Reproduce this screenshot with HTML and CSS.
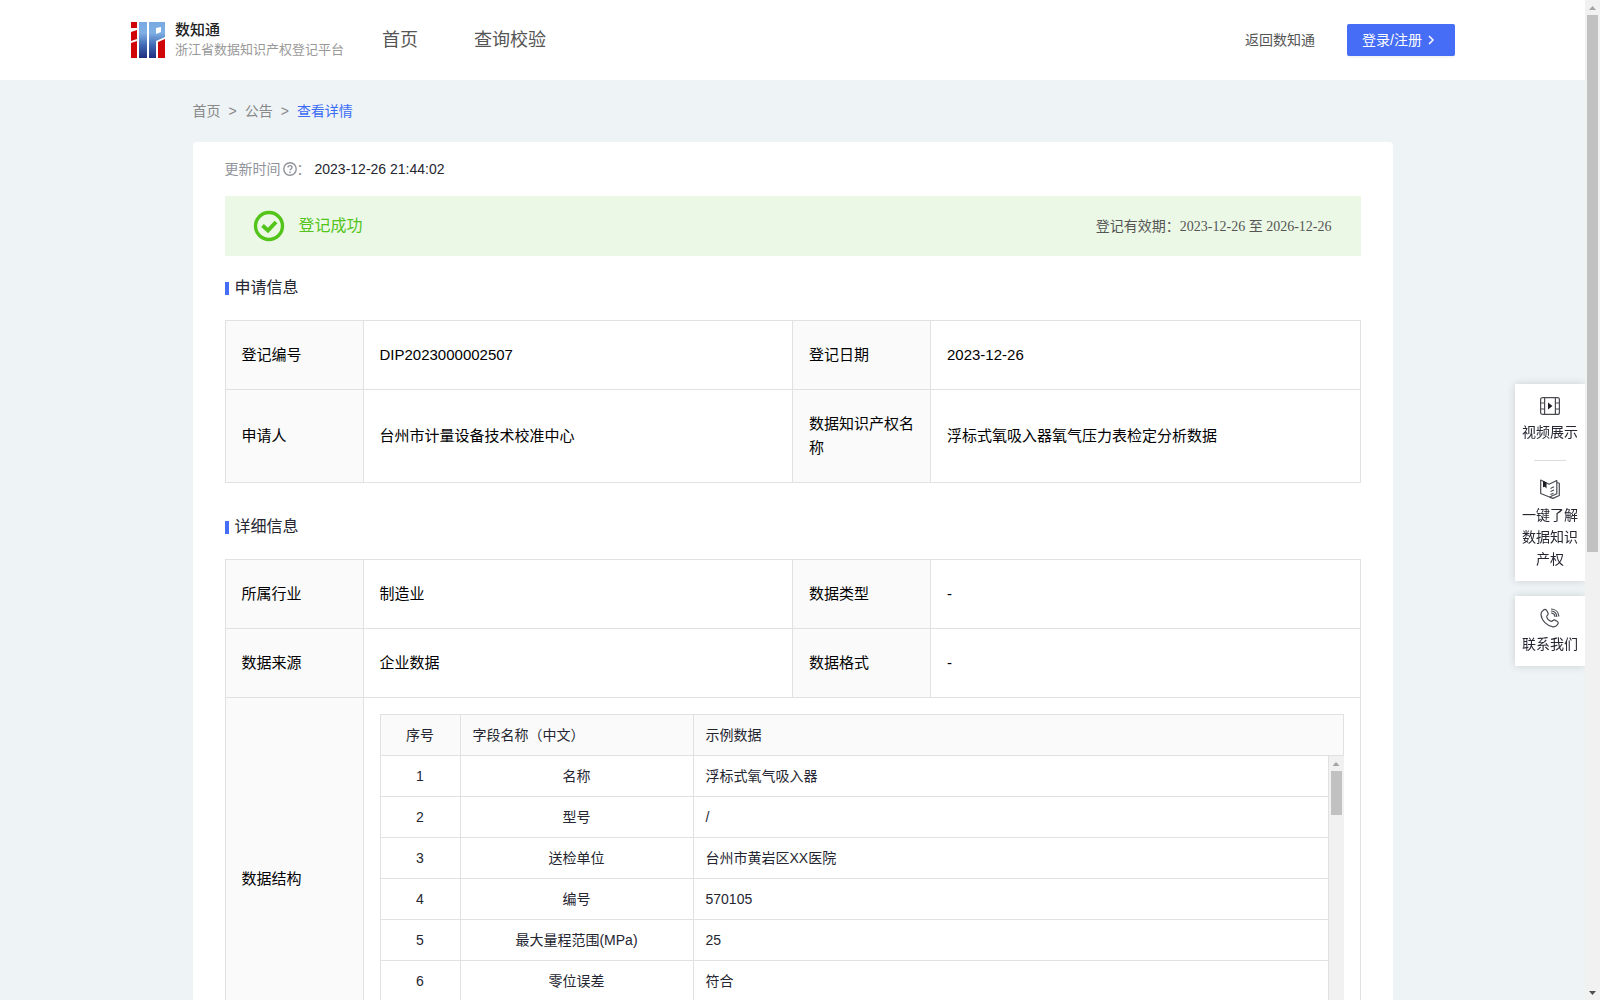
FILE: index.html
```html
<!DOCTYPE html>
<html lang="zh-CN">
<head>
<meta charset="utf-8">
<title>数知通 - 浙江省数据知识产权登记平台</title>
<link rel="stylesheet" href="styles.css">
</head>
<body>
<div class="window">
  <div class="page">
    <header class="header">
      <div class="header-inner">
        <a class="brand" href="#">
          <svg class="brand-logo" viewBox="0 0 34 36" width="34" height="36" aria-hidden="true">
            <defs>
              <linearGradient id="blue" gradientUnits="userSpaceOnUse" x1="0" y1="0" x2="0" y2="36">
                <stop offset="0" stop-color="#78a9e2"/>
                <stop offset=".3" stop-color="#7fb0e4"/>
                <stop offset=".65" stop-color="#4068b4"/>
                <stop offset="1" stop-color="#1f2f7e"/>
              </linearGradient>
            </defs>
            <path fill="#d00508" d="M0 0h6v6H0zM0 10l6-2v9l-6 2zM0 21l6-2v17H0zM27 20l7-3v19h-7z"/>
            <path fill="url(#blue)" d="M8 0h8v36H8z"/>
            <path fill="url(#blue)" d="M18 0h16v15l-9 4v17h-7zM25 6v6l5-2V5z" fill-rule="evenodd"/>
          </svg>
          <span class="brand-text">
            <strong class="brand-name">数知通</strong>
            <span class="brand-sub">浙江省数据知识产权登记平台</span>
          </span>
        </a>
        <nav class="nav">
          <a href="#">首页</a>
          <a href="#">查询校验</a>
        </nav>
        <div class="header-actions">
          <a class="back-link" href="#">返回数知通</a>
          <button class="login" type="button">登录/注册
            <svg viewBox="0 0 12 12" width="12" height="12" aria-hidden="true"><path d="M3 2l4 4-4 4" fill="none" stroke="currentColor" stroke-width="1.5"/></svg>
          </button>
        </div>
      </div>
    </header>

    <main class="main">
      <nav class="breadcrumb" aria-label="面包屑">
        <a href="#">首页</a><span>&gt;</span><a href="#">公告</a><span>&gt;</span><a class="current" href="#">查看详情</a>
      </nav>

      <article class="card">
        <div class="updated">
          <span class="updated-label">更新时间</span>
          <svg viewBox="0 0 14 14" width="14" height="14" aria-hidden="true">
            <circle cx="7" cy="7" r="6.2" fill="none" stroke="#909399" stroke-width="1.4"/>
            <path d="M5 5.6c0-2.6 4-2.6 4 0 0 1.300-2 1.400-2 2.700M7 9.600v1.300" fill="none" stroke="#909399" stroke-width="1.400"/>
          </svg>
          <span class="updated-label">：</span>
          <time class="updated-time">2023-12-26 21:44:02</time>
        </div>

        <div class="status">
          <svg viewBox="0 0 32 32" width="32" height="32" aria-hidden="true">
            <circle cx="16" cy="16" r="13.500" fill="none" stroke="#52c41a" stroke-width="3.400"/>
            <path d="M9.500 15.500l5.500 5 8-8.500" fill="none" stroke="#52c41a" stroke-width="4"/>
          </svg>
          <span class="status-text">登记成功</span>
          <span class="status-period">登记有效期：<span class="status-dates">2023-12-26 至 2026-12-26</span></span>
        </div>

        <h2 class="section-title">申请信息</h2>
        <table class="info">
          <colgroup><col class="col-label"><col><col class="col-label"><col></colgroup>
          <tbody>
            <tr><th scope="row">登记编号</th><td>DIP2023000002507</td><th scope="row">登记日期</th><td>2023-12-26</td></tr>
            <tr><th scope="row">申请人</th><td>台州市计量设备技术校准中心</td><th scope="row">数据知识产权名称</th><td>浮标式氧吸入器氧气压力表检定分析数据</td></tr>
          </tbody>
        </table>

        <h2 class="section-title">详细信息</h2>
        <table class="info">
          <colgroup><col class="col-label"><col><col class="col-label"><col></colgroup>
          <tbody>
            <tr><th scope="row">所属行业</th><td>制造业</td><th scope="row">数据类型</th><td>-</td></tr>
            <tr><th scope="row">数据来源</th><td>企业数据</td><th scope="row">数据格式</th><td>-</td></tr>
            <tr>
              <th scope="row">数据结构</th>
              <td class="nested" colspan="3">
                <table class="fields fields-head">
                  <colgroup><col class="col-index"><col class="col-name"><col></colgroup>
                  <thead><tr><th scope="col">序号</th><th scope="col">字段名称（中文）</th><th scope="col">示例数据</th></tr></thead>
                </table>
                <div class="fields-body">
                  <div class="fields-scroll">
                    <table class="fields">
                      <colgroup><col class="col-index"><col class="col-name"><col></colgroup>
                      <tbody>
                        <tr><td>1</td><td>名称</td><td>浮标式氧气吸入器</td></tr>
                        <tr><td>2</td><td>型号</td><td>/</td></tr>
                        <tr><td>3</td><td>送检单位</td><td>台州市黄岩区XX医院</td></tr>
                        <tr><td>4</td><td>编号</td><td>570105</td></tr>
                        <tr><td>5</td><td>最大量程范围(MPa)</td><td>25</td></tr>
                        <tr><td>6</td><td>零位误差</td><td>符合</td></tr>
                      </tbody>
                    </table>
                  </div>
                  <div class="scrollbar" aria-hidden="true">
                    <span class="arrow arrow-up"></span>
                    <span class="thumb thumb-fields"></span>
                  </div>
                </div>
              </td>
            </tr>
          </tbody>
        </table>
      </article>
    </main>
  </div>

  <div class="scrollbar" aria-hidden="true">
    <span class="arrow arrow-up"></span>
    <span class="thumb thumb-page"></span>
    <span class="arrow arrow-down"></span>
  </div>

  <aside class="side">
    <div class="side-box">
      <a class="side-item" href="#">
        <svg viewBox="0 0 20 20" width="20" height="20" aria-hidden="true">
          <g fill="none" stroke="#4a4b52" stroke-width="1.2">
            <rect x=".6" y="1.600" width="18.800" height="16.800" rx="2"/>
            <path d="M4.600 2v16M15.400 2v16M1 7h3.600M1 13h3.600M15.400 7H19M15.400 13H19"/>
          </g>
          <path d="M8 6.500v7l4.500-3.500z" fill="#1d1e24"/>
        </svg>
        <span>视频展示</span>
      </a>
      <hr class="side-rule">
      <a class="side-item" href="#">
        <svg viewBox="0 0 20 20" width="20" height="20" aria-hidden="true">
          <g fill="none" stroke="#4a4b52" stroke-width="1.2" stroke-linejoin="round">
            <path d="M.7 1l8.300 4.200L16.800 1.500v13.200L9.500 18 .7 14.500zM17 3.500l2.300.7v12.300L13 19.400l-3.500-1.300"/>
            <path d="M10.500 9.500l3.500-1.700M10.500 12.500l3.500-1.500M10.500 15.500l3-1.300"/>
          </g>
          <path d="M3 1.800l3.500 1.700v6L4.800 7.800 3 8.200z" fill="#1d1e24"/>
        </svg>
        <span>一键了解数据知识产权</span>
      </a>
    </div>
    <div class="side-box">
      <a class="side-item" href="#">
        <svg viewBox="0 0 20 20" width="20" height="20" aria-hidden="true">
          <g fill="none" stroke="#4a4b52" stroke-width="1.200" stroke-linecap="round" stroke-linejoin="round">
            <path d="M3 2.500C5 .8 5.800 1 7 3l1.200 2.500c.5 1-1.700 2-1.500 3.200.4 2 2.300 4 4.500 4.700 1 .2 2-2 3.300-1.500l2.500 1.300c1.700 1 1.500 1.800.3 3.600-1 1.600-2.500 2.200-4.300 2C7 18 1.500 12.500 1 6.500.9 4.800 1.600 3.500 3 2.500z"/>
            <path d="M11.500 5c2 .2 3.300 1.600 3.500 3.500M11.500 3c3 .2 5 2.500 5.300 5.500M11.500 1c4 .2 7 3 7.300 7"/>
          </g>
        </svg>
        <span>联系我们</span>
      </a>
    </div>
  </aside>
</div>
</body>
</html>
```
FILE: styles.css
```css
* {
  box-sizing: border-box;
}

body {
  margin: 0;
  background: #eef3f6;
  color: #252631;
  font-family: "Liberation Sans", "Noto Sans CJK SC", sans-serif;
  font-size: 14px;
  line-height: 22px;
}

a {
  color: inherit;
  text-decoration: none;
}

svg {
  flex: none;
}

.window {
  display: flex;
  height: 100vh;
}

.page {
  flex: 1;
  min-width: 0;
  overflow-y: auto;
  scrollbar-width: none;
}

/* Header */
.header {
  background: #fff;
}

.header-inner {
  display: flex;
  align-items: center;
  height: 80px;
  padding: 0 130px 0 131px;
}

.brand {
  display: flex;
  align-items: center;
  gap: 10px;
  width: 251px;
}

.brand-text {
  display: flex;
  flex-direction: column;
}

.brand-name {
  color: #222;
  font-size: 15px;
  font-weight: 500;
  line-height: 20px;
}

.brand-sub {
  color: #999;
  font-size: 13px;
  line-height: 20px;
  white-space: nowrap;
}

.nav {
  display: flex;
  gap: 56px;
  color: #555;
  font-size: 18px;
}

.header-actions {
  display: flex;
  align-items: center;
  gap: 32px;
  margin-left: auto;
}

.back-link {
  color: #555;
}

.login {
  display: flex;
  align-items: center;
  gap: 4px;
  width: 108px;
  height: 32px;
  padding: 0 15px;
  border: 0;
  border-radius: 2px;
  background: #456df5;
  box-shadow: 0 2px 0 rgba(0, 0, 0, 0.04);
  color: #fff;
  font: inherit;
  white-space: nowrap;
}

/* Content */
.main {
  max-width: 1200px;
  margin: 0 auto;
}

.breadcrumb {
  display: flex;
  align-items: center;
  gap: 8px;
  height: 62px;
  color: #888;
}

.breadcrumb .current {
  color: #3a6cf6;
}

.card {
  padding: 16px 32px 32px;
  border-radius: 4px;
  background: #fff;
}

.updated {
  display: flex;
  align-items: center;
}

.updated-label {
  color: #909399;
}

.updated svg {
  margin-left: 2px;
}

.updated-time {
  margin-left: 4px;
}

.status {
  display: flex;
  align-items: center;
  gap: 14px;
  height: 60px;
  margin-top: 16px;
  padding: 0 29px 0 28px;
  background: #ebf8e6;
}

.status-text {
  color: #52c41a;
  font-size: 16px;
}

.status-period {
  margin-left: auto;
  color: #555;
}

.status-dates {
  font-family: "Liberation Serif", "Noto Sans CJK SC", serif;
}

.section-title {
  display: flex;
  align-items: center;
  gap: 6px;
  height: 64px;
  margin: 0;
  font-size: 16px;
  font-weight: 400;
}

.section-title::before {
  width: 4px;
  height: 13px;
  background: #456df5;
  content: "";
}

.info + .section-title {
  height: 76px;
  padding-top: 12px;
}

.info,
.fields {
  width: 100%;
  border-collapse: collapse;
  table-layout: fixed;
}

.info {
  color: #000;
  font-size: 15px;
  line-height: 24px;
}

.col-label {
  width: 138px;
}

.info th,
.info td {
  padding: 22px 16px;
  border: 1px solid #e1e1e1;
  font-weight: 400;
  text-align: left;
}

.info th {
  background: #fafafa;
}

.info .nested {
  padding: 16px;
}

/* Nested field list */
.nested .fields {
  color: #252631;
  font-size: 14px;
  line-height: 22px;
}

.col-index {
  width: 80px;
}

.col-name {
  width: 233px;
}

.nested .fields th,
.nested .fields td {
  padding: 9px 12px;
}

.nested .fields td:nth-child(-n + 2),
.nested .fields th:first-child {
  text-align: center;
}

.fields-body {
  display: flex;
  height: 288px;
}

.fields-scroll {
  flex: 1;
  overflow-y: auto;
  scrollbar-width: none;
}

.nested .fields-scroll tr:first-child td {
  border-top: 0;
}

/* Scrollbars */
.scrollbar {
  display: flex;
  flex: none;
  flex-direction: column;
  align-items: center;
  width: 15px;
  background: #f1f1f1;
}

.arrow {
  width: 7px;
  height: 4px;
  margin: 6px 0 5px;
}

.arrow-up {
  background: #a3a3a3;
  clip-path: polygon(50% 0, 100% 100%, 0 100%);
}

.arrow-down {
  margin-top: auto;
  background: #505050;
  clip-path: polygon(0 0, 100% 0, 50% 100%);
}

.thumb {
  width: 11px;
  background: #c1c1c1;
}

.thumb-fields {
  height: 44px;
}

.thumb-page {
  height: calc(54vh - 3px);
}

/* Floating shortcuts */
.side {
  position: fixed;
  top: 384px;
  right: 15px;
  display: flex;
  flex-direction: column;
  gap: 15px;
  width: 70px;
}

.side-box {
  padding: 12px 7px 11px;
  background: #fff;
  box-shadow: 0 0 8px rgba(0, 0, 0, 0.15);
  clip-path: inset(-12px 0 -12px -12px);
}

.side-item {
  display: flex;
  flex-direction: column;
  align-items: center;
  gap: 5px;
  text-align: center;
}

.side-rule {
  width: 32px;
  margin: 17px auto 18px;
  border: 0;
  border-top: 1px solid #dcdcdc;
}
```
